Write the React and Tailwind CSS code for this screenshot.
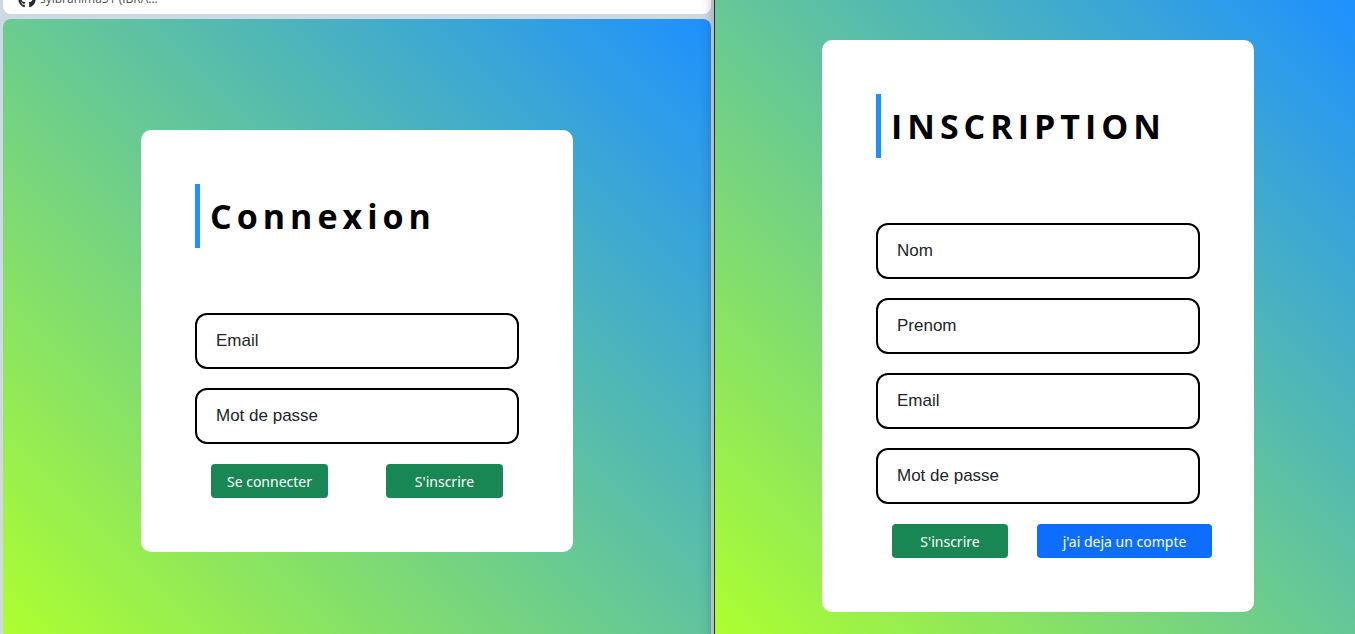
import React from "react";
import { FaGithub } from "react-icons/fa";

function Field({ label, type = "text" }) {
  return (
    <input
      type={type}
      aria-label={label}
      placeholder={label}
      className="h-14 w-full rounded-xl border-2 border-black bg-white px-[19px] font-['Liberation_Sans',Arial,sans-serif] text-[17px] text-[#212529] placeholder:text-[#212529] placeholder:opacity-100 focus:outline-none"
    />
  );
}

function Card({ title, children }) {
  return (
    <form className="w-[432px] max-w-full rounded-[10px] bg-white p-[54px]" onSubmit={(e) => e.preventDefault()}>
      <h1 className="mb-[65px] border-l-[5px] border-[#1e90ff] pl-[10px] text-[34px] leading-[64px] font-bold tracking-[5px] text-black">
        {title}
      </h1>
      {children}
    </form>
  );
}

function Button({ children, className }) {
  return (
    <button type="submit" className={`h-[34px] shrink-0 rounded font-['Noto_Sans','Open_Sans',sans-serif] text-[14px] text-white ${className}`}>
      {children}
    </button>
  );
}

export default function App() {
  return (
    <div className="grid h-screen grid-cols-[714fr_1px_640fr] overflow-hidden font-['Open_Sans','Noto_Sans',sans-serif]">
      <section className="relative flex min-h-0 flex-col overflow-hidden bg-[#cfd9e4] pr-[3px] pl-[3px]">
        <div className="flex h-[14px] shrink-0 items-end overflow-hidden rounded-b-lg bg-white pl-[15px]">
          <a href="#github" className="flex h-6 items-center gap-1 pb-1.5 text-xs text-[#4a4d52]">
            <FaGithub className="size-[18px] text-[#24292f]" />
            <span>sylbrahima51 (IBRA...</span>
          </a>
        </div>
        <main className="mt-[5px] flex grow items-start justify-center rounded-t-lg bg-linear-[45deg,#adff2f,#1e90ff] pt-[111px]">
          <Card title="Connexion">
            <div className="flex flex-col gap-[19px]">
              <Field label="Email" type="email" />
              <Field label="Mot de passe" type="password" />
            </div>
            <div className="mt-5 flex justify-between px-4">
              <Button className="w-[117px] bg-[#198754]">Se connecter</Button>
              <Button className="w-[117px] bg-[#198754]">S'inscrire</Button>
            </div>
          </Card>
        </main>
        <div className="pointer-events-none absolute inset-y-0 right-0 w-4 bg-linear-to-r from-transparent via-black/3 to-black/15" />
      </section>
      <div className="bg-[#2d2d35]" />
      <section className="flex min-h-0 items-start justify-center bg-linear-[45deg,#adff2f,#1e90ff] pt-10 pl-1.5">
        <Card title="INSCRIPTION">
          <div className="flex flex-col gap-[19px]">
            <Field label="Nom" />
            <Field label="Prenom" />
            <Field label="Email" type="email" />
            <Field label="Mot de passe" type="password" />
          </div>
          <div className="mt-5 flex gap-[29px] pl-4">
            <Button className="w-[116px] bg-[#198754]">S'inscrire</Button>
            <Button className="w-[175px] bg-[#0d6efd]">j'ai deja un compte</Button>
          </div>
        </Card>
      </section>
    </div>
  );
}
